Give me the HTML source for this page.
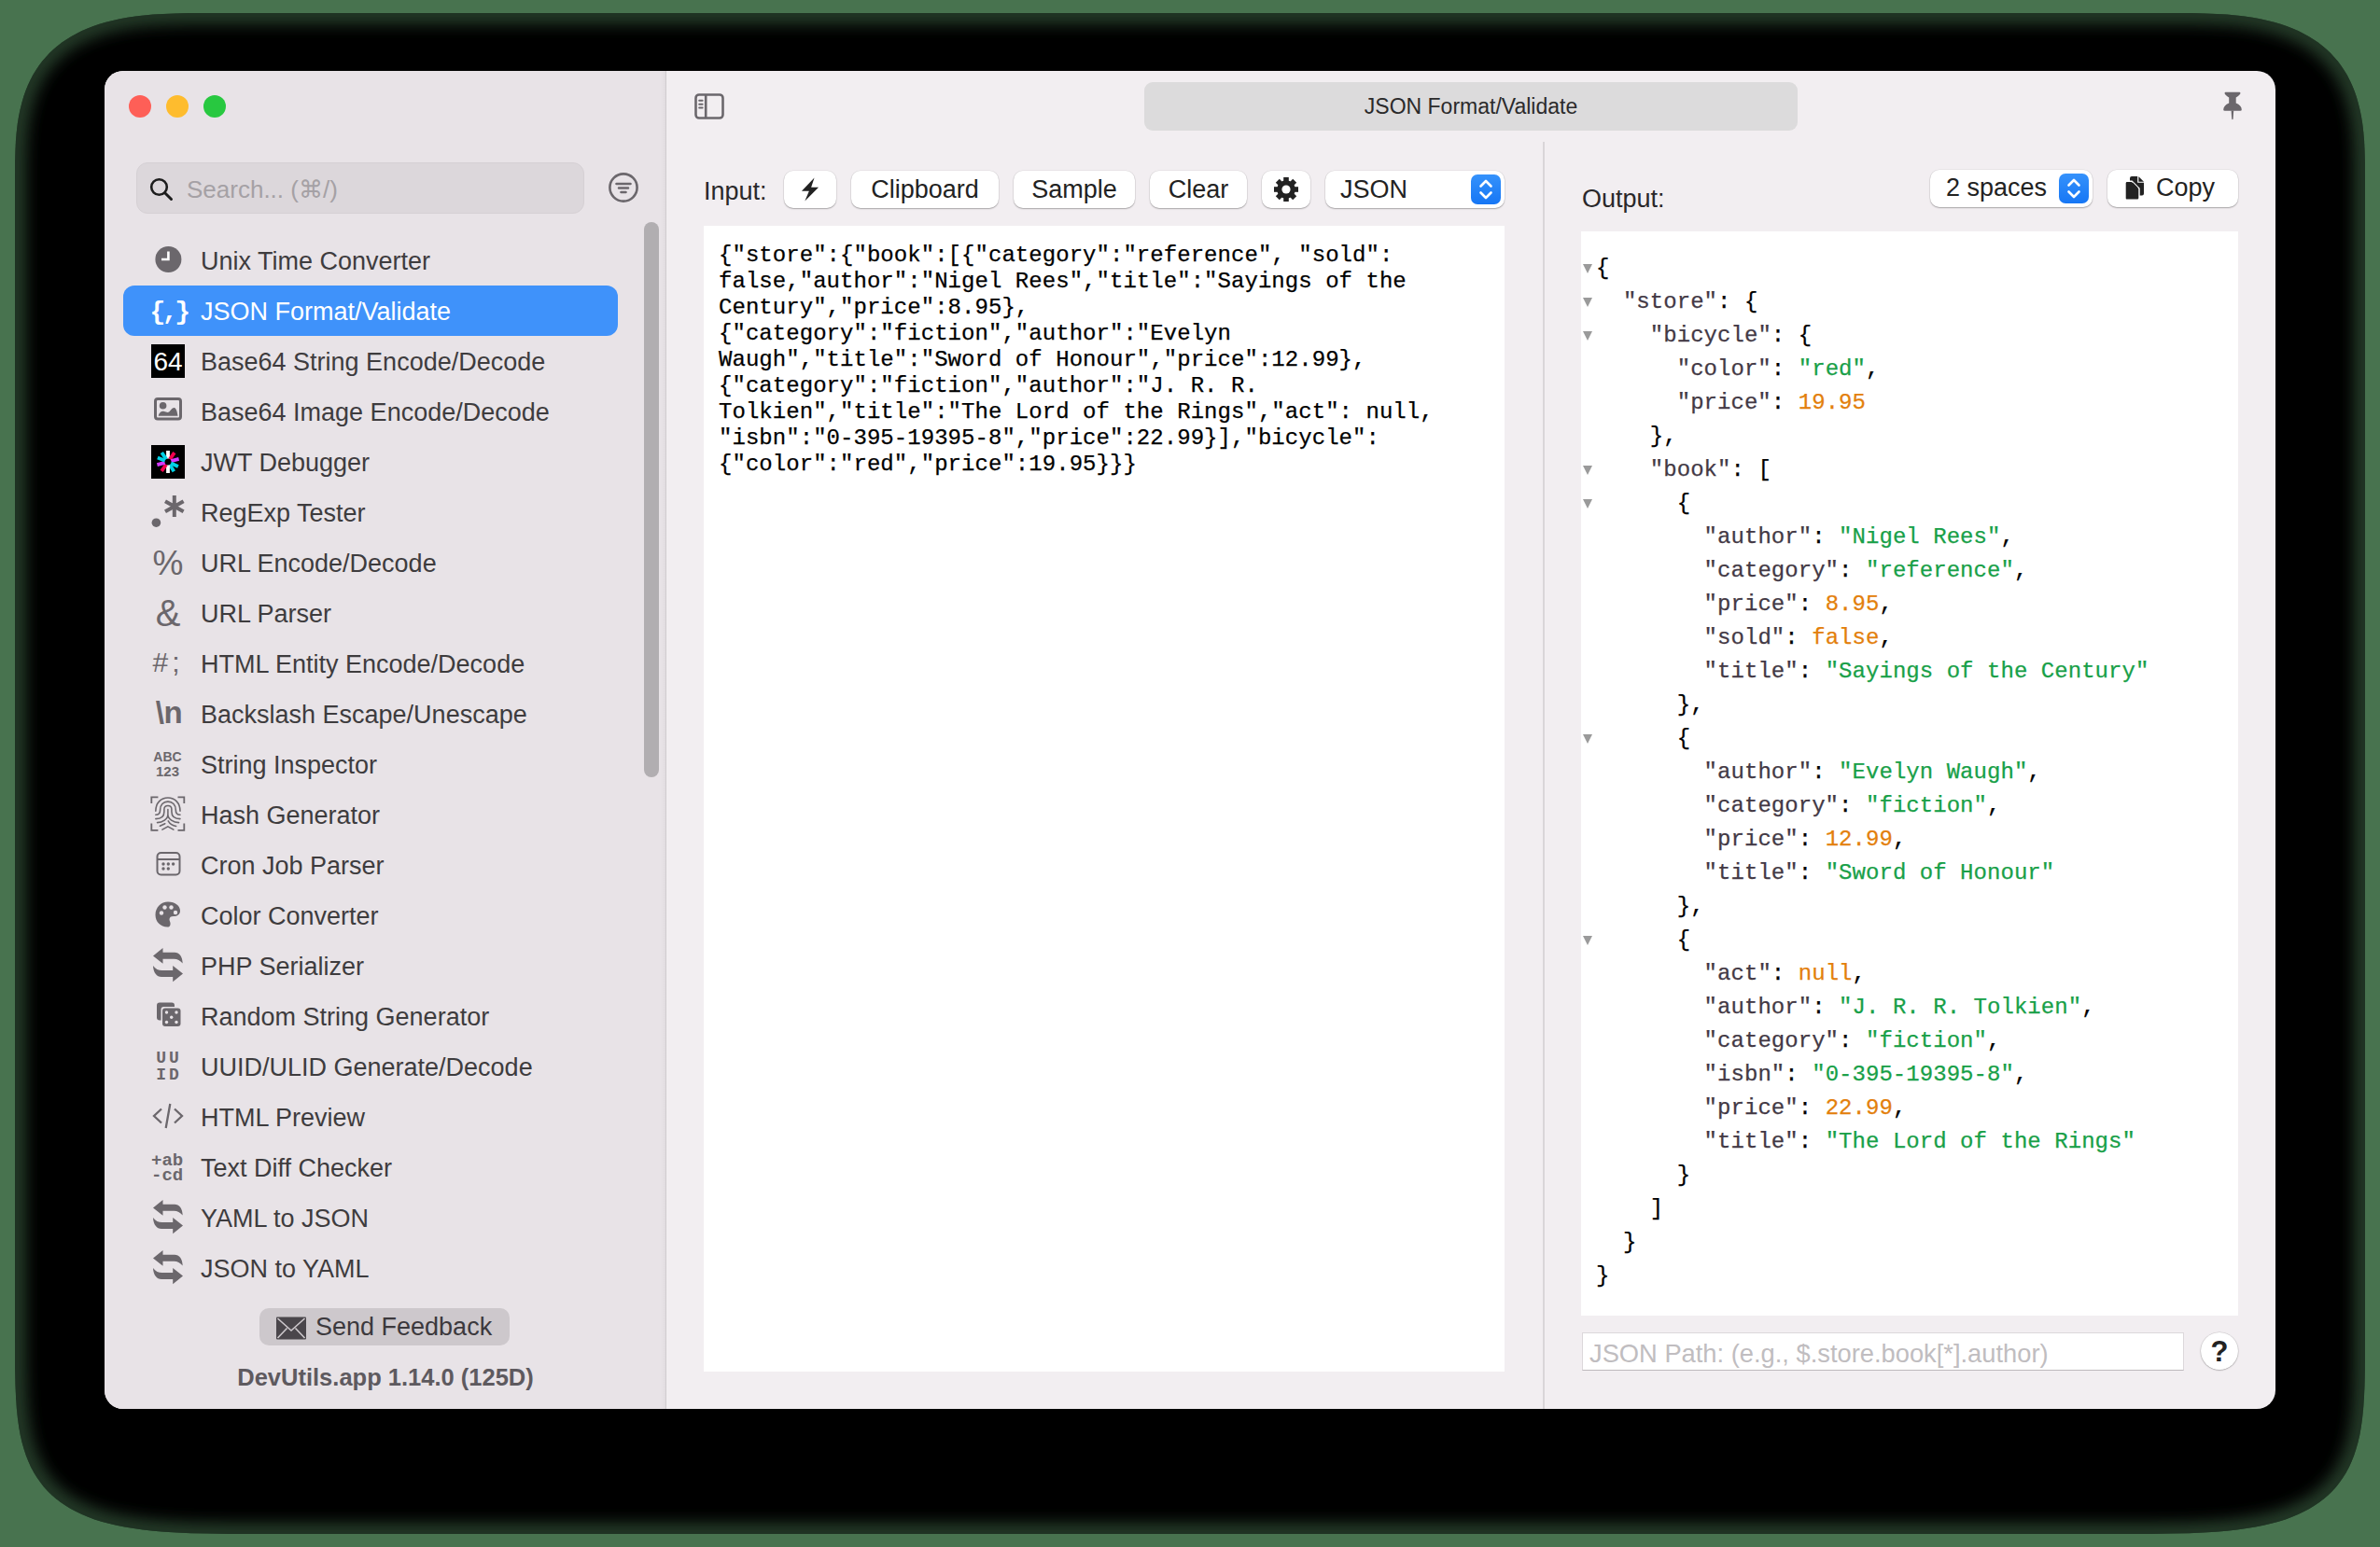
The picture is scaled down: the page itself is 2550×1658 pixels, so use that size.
<!DOCTYPE html>
<html><head><meta charset="utf-8">
<style>
*{box-sizing:border-box;margin:0;padding:0}
html,body{width:2550px;height:1658px;overflow:hidden;background:#48734f;font-family:"Liberation Sans",sans-serif}
.abs{position:absolute}
#win{position:absolute;left:112px;top:76px;width:2326px;height:1434px;border-radius:20px;overflow:hidden;background:#f2eef1}
#side{position:absolute;left:0;top:0;width:602px;height:1434px;background:#e8e3e7;border-right:1px solid #d8d3d7}
.tl{position:absolute;top:26px;width:24px;height:24px;border-radius:50%}
.row{position:absolute;left:20px;width:530px;height:54px;border-radius:12px}
.row .t{position:absolute;left:83px;top:1px;line-height:54px;font-size:27px;color:#3e3c3e;white-space:nowrap}
.row.sel{background:#3f92fa}
.row.sel .t{color:#fff}
.ic{position:absolute;left:30px;top:9px;width:36px;height:36px}
.btn{position:absolute;top:107px;height:40px;background:#fff;border-radius:10px;box-shadow:0 1px 1.5px rgba(0,0,0,.28),0 0 0 .5px rgba(0,0,0,.08);font-size:27px;color:#222;line-height:40px;text-align:center;white-space:nowrap}
.mono{font-family:"Liberation Mono",monospace;font-size:24px;white-space:pre;letter-spacing:0.045px;-webkit-text-stroke:0.25px currentColor}
.k{color:#433945}.s{color:#18a048}.n{color:#e37f0c}
.tri{display:inline-block}
</style></head>
<body>
<svg id="shadow" width="2550" height="1658" viewBox="0 0 2550 1658" style="position:absolute;left:0;top:0"><defs><clipPath id="sc"><path d="M16.0 194.0 L16.1 172.9 L16.5 160.5 L17.0 150.1 L17.8 140.9 L18.8 132.4 L20.1 124.6 L21.6 117.3 L23.3 110.4 L25.2 103.8 L27.4 97.6 L29.7 91.7 L32.4 86.0 L35.2 80.6 L38.3 75.5 L41.6 70.5 L45.1 65.8 L48.9 61.4 L52.9 57.1 L57.1 53.1 L61.6 49.2 L66.3 45.6 L71.3 42.2 L76.5 39.0 L82.0 35.9 L87.7 33.1 L93.7 30.5 L100.0 28.0 L106.6 25.8 L113.5 23.7 L120.8 21.9 L128.4 20.2 L136.5 18.8 L145.1 17.5 L154.2 16.4 L164.0 15.6 L174.8 14.9 L186.9 14.4 L201.3 14.1 L226.0 14.0 L2324.0 14.0 L2348.7 14.1 L2363.1 14.4 L2375.2 14.9 L2386.0 15.6 L2395.8 16.4 L2404.9 17.5 L2413.5 18.8 L2421.6 20.2 L2429.2 21.9 L2436.5 23.7 L2443.4 25.8 L2450.0 28.0 L2456.3 30.5 L2462.3 33.1 L2468.0 35.9 L2473.5 39.0 L2478.7 42.2 L2483.7 45.6 L2488.4 49.2 L2492.9 53.1 L2497.1 57.1 L2501.1 61.4 L2504.9 65.8 L2508.4 70.5 L2511.7 75.5 L2514.8 80.6 L2517.6 86.0 L2520.3 91.7 L2522.6 97.6 L2524.8 103.8 L2526.7 110.4 L2528.4 117.3 L2529.9 124.6 L2531.2 132.4 L2532.2 140.9 L2533.0 150.1 L2533.5 160.5 L2533.9 172.9 L2534.0 194.0 L2534.0 1424.0 L2533.9 1466.4 L2533.5 1484.4 L2532.9 1498.3 L2532.1 1510.1 L2531.0 1520.4 L2529.7 1529.7 L2528.2 1538.2 L2526.4 1546.0 L2524.3 1553.3 L2522.1 1560.1 L2519.5 1566.5 L2516.8 1572.5 L2513.7 1578.2 L2510.4 1583.5 L2506.9 1588.6 L2503.1 1593.4 L2499.0 1597.9 L2494.7 1602.2 L2490.0 1606.2 L2485.1 1610.1 L2479.9 1613.6 L2474.3 1617.0 L2468.5 1620.1 L2462.3 1623.1 L2455.7 1625.8 L2448.7 1628.4 L2441.4 1630.7 L2433.6 1632.8 L2425.3 1634.8 L2416.5 1636.5 L2407.0 1638.1 L2396.9 1639.5 L2385.9 1640.7 L2373.9 1641.7 L2360.5 1642.5 L2345.3 1643.2 L2327.3 1643.6 L2303.9 1643.9 L2249.0 1644.0 L301.0 1644.0 L246.1 1643.9 L222.7 1643.6 L204.7 1643.2 L189.5 1642.5 L176.1 1641.7 L164.1 1640.7 L153.1 1639.5 L143.0 1638.1 L133.5 1636.5 L124.7 1634.8 L116.4 1632.8 L108.6 1630.7 L101.3 1628.4 L94.3 1625.8 L87.7 1623.1 L81.5 1620.1 L75.7 1617.0 L70.1 1613.6 L64.9 1610.1 L60.0 1606.2 L55.3 1602.2 L51.0 1597.9 L46.9 1593.4 L43.1 1588.6 L39.6 1583.5 L36.3 1578.2 L33.2 1572.5 L30.5 1566.5 L27.9 1560.1 L25.7 1553.3 L23.6 1546.0 L21.8 1538.2 L20.3 1529.7 L19.0 1520.4 L17.9 1510.1 L17.1 1498.3 L16.5 1484.4 L16.1 1466.4 L16.0 1424.0 Z"/></clipPath><filter id="bl" x="-5%" y="-5%" width="110%" height="110%"><feGaussianBlur stdDeviation="8"/></filter></defs><path d="M16.0 194.0 L16.1 172.9 L16.5 160.5 L17.0 150.1 L17.8 140.9 L18.8 132.4 L20.1 124.6 L21.6 117.3 L23.3 110.4 L25.2 103.8 L27.4 97.6 L29.7 91.7 L32.4 86.0 L35.2 80.6 L38.3 75.5 L41.6 70.5 L45.1 65.8 L48.9 61.4 L52.9 57.1 L57.1 53.1 L61.6 49.2 L66.3 45.6 L71.3 42.2 L76.5 39.0 L82.0 35.9 L87.7 33.1 L93.7 30.5 L100.0 28.0 L106.6 25.8 L113.5 23.7 L120.8 21.9 L128.4 20.2 L136.5 18.8 L145.1 17.5 L154.2 16.4 L164.0 15.6 L174.8 14.9 L186.9 14.4 L201.3 14.1 L226.0 14.0 L2324.0 14.0 L2348.7 14.1 L2363.1 14.4 L2375.2 14.9 L2386.0 15.6 L2395.8 16.4 L2404.9 17.5 L2413.5 18.8 L2421.6 20.2 L2429.2 21.9 L2436.5 23.7 L2443.4 25.8 L2450.0 28.0 L2456.3 30.5 L2462.3 33.1 L2468.0 35.9 L2473.5 39.0 L2478.7 42.2 L2483.7 45.6 L2488.4 49.2 L2492.9 53.1 L2497.1 57.1 L2501.1 61.4 L2504.9 65.8 L2508.4 70.5 L2511.7 75.5 L2514.8 80.6 L2517.6 86.0 L2520.3 91.7 L2522.6 97.6 L2524.8 103.8 L2526.7 110.4 L2528.4 117.3 L2529.9 124.6 L2531.2 132.4 L2532.2 140.9 L2533.0 150.1 L2533.5 160.5 L2533.9 172.9 L2534.0 194.0 L2534.0 1424.0 L2533.9 1466.4 L2533.5 1484.4 L2532.9 1498.3 L2532.1 1510.1 L2531.0 1520.4 L2529.7 1529.7 L2528.2 1538.2 L2526.4 1546.0 L2524.3 1553.3 L2522.1 1560.1 L2519.5 1566.5 L2516.8 1572.5 L2513.7 1578.2 L2510.4 1583.5 L2506.9 1588.6 L2503.1 1593.4 L2499.0 1597.9 L2494.7 1602.2 L2490.0 1606.2 L2485.1 1610.1 L2479.9 1613.6 L2474.3 1617.0 L2468.5 1620.1 L2462.3 1623.1 L2455.7 1625.8 L2448.7 1628.4 L2441.4 1630.7 L2433.6 1632.8 L2425.3 1634.8 L2416.5 1636.5 L2407.0 1638.1 L2396.9 1639.5 L2385.9 1640.7 L2373.9 1641.7 L2360.5 1642.5 L2345.3 1643.2 L2327.3 1643.6 L2303.9 1643.9 L2249.0 1644.0 L301.0 1644.0 L246.1 1643.9 L222.7 1643.6 L204.7 1643.2 L189.5 1642.5 L176.1 1641.7 L164.1 1640.7 L153.1 1639.5 L143.0 1638.1 L133.5 1636.5 L124.7 1634.8 L116.4 1632.8 L108.6 1630.7 L101.3 1628.4 L94.3 1625.8 L87.7 1623.1 L81.5 1620.1 L75.7 1617.0 L70.1 1613.6 L64.9 1610.1 L60.0 1606.2 L55.3 1602.2 L51.0 1597.9 L46.9 1593.4 L43.1 1588.6 L39.6 1583.5 L36.3 1578.2 L33.2 1572.5 L30.5 1566.5 L27.9 1560.1 L25.7 1553.3 L23.6 1546.0 L21.8 1538.2 L20.3 1529.7 L19.0 1520.4 L17.9 1510.1 L17.1 1498.3 L16.5 1484.4 L16.1 1466.4 L16.0 1424.0 Z" fill="#000"/><g clip-path="url(#sc)"><path d="M16.0 194.0 L16.1 172.9 L16.5 160.5 L17.0 150.1 L17.8 140.9 L18.8 132.4 L20.1 124.6 L21.6 117.3 L23.3 110.4 L25.2 103.8 L27.4 97.6 L29.7 91.7 L32.4 86.0 L35.2 80.6 L38.3 75.5 L41.6 70.5 L45.1 65.8 L48.9 61.4 L52.9 57.1 L57.1 53.1 L61.6 49.2 L66.3 45.6 L71.3 42.2 L76.5 39.0 L82.0 35.9 L87.7 33.1 L93.7 30.5 L100.0 28.0 L106.6 25.8 L113.5 23.7 L120.8 21.9 L128.4 20.2 L136.5 18.8 L145.1 17.5 L154.2 16.4 L164.0 15.6 L174.8 14.9 L186.9 14.4 L201.3 14.1 L226.0 14.0 L2324.0 14.0 L2348.7 14.1 L2363.1 14.4 L2375.2 14.9 L2386.0 15.6 L2395.8 16.4 L2404.9 17.5 L2413.5 18.8 L2421.6 20.2 L2429.2 21.9 L2436.5 23.7 L2443.4 25.8 L2450.0 28.0 L2456.3 30.5 L2462.3 33.1 L2468.0 35.9 L2473.5 39.0 L2478.7 42.2 L2483.7 45.6 L2488.4 49.2 L2492.9 53.1 L2497.1 57.1 L2501.1 61.4 L2504.9 65.8 L2508.4 70.5 L2511.7 75.5 L2514.8 80.6 L2517.6 86.0 L2520.3 91.7 L2522.6 97.6 L2524.8 103.8 L2526.7 110.4 L2528.4 117.3 L2529.9 124.6 L2531.2 132.4 L2532.2 140.9 L2533.0 150.1 L2533.5 160.5 L2533.9 172.9 L2534.0 194.0 L2534.0 1424.0 L2533.9 1466.4 L2533.5 1484.4 L2532.9 1498.3 L2532.1 1510.1 L2531.0 1520.4 L2529.7 1529.7 L2528.2 1538.2 L2526.4 1546.0 L2524.3 1553.3 L2522.1 1560.1 L2519.5 1566.5 L2516.8 1572.5 L2513.7 1578.2 L2510.4 1583.5 L2506.9 1588.6 L2503.1 1593.4 L2499.0 1597.9 L2494.7 1602.2 L2490.0 1606.2 L2485.1 1610.1 L2479.9 1613.6 L2474.3 1617.0 L2468.5 1620.1 L2462.3 1623.1 L2455.7 1625.8 L2448.7 1628.4 L2441.4 1630.7 L2433.6 1632.8 L2425.3 1634.8 L2416.5 1636.5 L2407.0 1638.1 L2396.9 1639.5 L2385.9 1640.7 L2373.9 1641.7 L2360.5 1642.5 L2345.3 1643.2 L2327.3 1643.6 L2303.9 1643.9 L2249.0 1644.0 L301.0 1644.0 L246.1 1643.9 L222.7 1643.6 L204.7 1643.2 L189.5 1642.5 L176.1 1641.7 L164.1 1640.7 L153.1 1639.5 L143.0 1638.1 L133.5 1636.5 L124.7 1634.8 L116.4 1632.8 L108.6 1630.7 L101.3 1628.4 L94.3 1625.8 L87.7 1623.1 L81.5 1620.1 L75.7 1617.0 L70.1 1613.6 L64.9 1610.1 L60.0 1606.2 L55.3 1602.2 L51.0 1597.9 L46.9 1593.4 L43.1 1588.6 L39.6 1583.5 L36.3 1578.2 L33.2 1572.5 L30.5 1566.5 L27.9 1560.1 L25.7 1553.3 L23.6 1546.0 L21.8 1538.2 L20.3 1529.7 L19.0 1520.4 L17.9 1510.1 L17.1 1498.3 L16.5 1484.4 L16.1 1466.4 L16.0 1424.0 Z" fill="none" stroke="#48734f" stroke-width="24" stroke-opacity=".5" filter="url(#bl)"/></g></svg>
<div id="win">
 <div id="side">
  <div class="tl" style="left:26px;background:#fe5f57"></div>
  <div class="tl" style="left:66px;background:#febc2e"></div>
  <div class="tl" style="left:106px;background:#28c840"></div>
  <!-- search -->
  <div class="abs" style="left:34px;top:98px;width:480px;height:55px;border-radius:12px;background:#dcd7db;border:1px solid #d5d0d4"></div>
  <div class="abs" style="left:88px;top:100px;line-height:55px;font-size:26px;color:#a5a1a5">Search... (⌘/)</div>
  <!-- scrollbar -->
  <div class="abs" style="left:578px;top:162px;width:16px;height:595px;border-radius:8px;background:#b1aeb1"></div>
  <div class="row" style="top:176px"><svg class="ic" viewBox="0 0 36 36" width="36" height="36" style="overflow:visible" ><circle cx="18.4" cy="17" r="14" fill="#6b676c"/><path d="M18.4 8.5 V17 H11" fill="none" stroke="#fff" stroke-width="2.6"/></svg><div class="t">Unix Time Converter</div></div>
<div class="row sel" style="top:230px"><svg class="ic" viewBox="0 0 36 36" width="36" height="36" style="overflow:visible" ><text x="18.5" y="26.5" text-anchor="middle" font-family="Liberation Mono" font-weight="bold" font-size="28" fill="#fff" letter-spacing="-3.5">{,}</text></svg><div class="t">JSON Format/Validate</div></div>
<div class="row" style="top:284px"><svg class="ic" viewBox="0 0 36 36" width="36" height="36" style="overflow:visible" ><rect x="0" y="0" width="36" height="36" fill="#000"/><text x="18" y="28" text-anchor="middle" font-family="Liberation Sans" font-size="28" fill="#fff">64</text></svg><div class="t">Base64 String Encode/Decode</div></div>
<div class="row" style="top:338px"><svg class="ic" viewBox="0 0 36 36" width="36" height="36" style="overflow:visible" ><rect x="4.5" y="4.6" width="27" height="21.3" rx="2.5" fill="none" stroke="#6b676c" stroke-width="3"/><circle cx="12.6" cy="11.7" r="3.8" fill="#6b676c"/><path d="M7.7 22.8 C9 18 12 17.5 14 18 C16 18.5 17.5 19.5 19 18.5 C21 17 22.5 13.5 25 14 C27 14.8 28 19 28.5 22.8 Z" fill="#6b676c"/></svg><div class="t">Base64 Image Encode/Decode</div></div>
<div class="row" style="top:392px"><svg class="ic" viewBox="0 0 36 36" width="36" height="36" style="overflow:visible" ><rect x="0" y="0" width="36" height="36" fill="#000"/><line x1="18.00" y1="14.50" x2="18.00" y2="6.00" stroke="#fff" stroke-width="3.8"/><line x1="20.01" y1="15.13" x2="24.88" y2="8.17" stroke="#f5004f" stroke-width="3.8"/><line x1="21.38" y1="17.09" x2="29.59" y2="14.89" stroke="#d63aff" stroke-width="3.8"/><line x1="21.17" y1="19.48" x2="28.88" y2="23.07" stroke="#00d2e6" stroke-width="3.8"/><line x1="19.85" y1="20.97" x2="24.36" y2="28.18" stroke="#00d2e6" stroke-width="3.8"/><line x1="18.00" y1="21.50" x2="18.00" y2="30.00" stroke="#fff" stroke-width="3.8"/><line x1="15.99" y1="20.87" x2="11.12" y2="27.83" stroke="#f5004f" stroke-width="3.8"/><line x1="14.62" y1="18.91" x2="6.41" y2="21.11" stroke="#d63aff" stroke-width="3.8"/><line x1="14.75" y1="16.69" x2="6.87" y2="13.50" stroke="#00d2e6" stroke-width="3.8"/><line x1="16.04" y1="15.10" x2="11.29" y2="8.05" stroke="#00d2e6" stroke-width="3.8"/></svg><div class="t">JWT Debugger</div></div>
<div class="row" style="top:446px"><svg class="ic" viewBox="0 0 36 36" width="36" height="36" style="overflow:visible" ><circle cx="5.4" cy="29.2" r="4.8" fill="#6b676c"/><path d="M24.8 0 V23 M15 6.2 L34.6 17.3 M15 17.3 L34.6 6.2" stroke="#6b676c" stroke-width="4"/></svg><div class="t">RegExp Tester</div></div>
<div class="row" style="top:500px"><svg class="ic" viewBox="0 0 36 36" width="36" height="36" style="overflow:visible" ><text x="18" y="31" text-anchor="middle" font-family="Liberation Sans" font-size="37" fill="#6b676c">%</text></svg><div class="t">URL Encode/Decode</div></div>
<div class="row" style="top:554px"><svg class="ic" viewBox="0 0 36 36" width="36" height="36" style="overflow:visible" ><text x="18" y="31.5" text-anchor="middle" font-family="Liberation Sans" font-size="40" fill="#6b676c">&amp;</text></svg><div class="t">URL Parser</div></div>
<div class="row" style="top:608px"><svg class="ic" viewBox="0 0 36 36" width="36" height="36" style="overflow:visible" ><text x="18" y="26.5" text-anchor="middle" font-family="Liberation Sans" font-size="30" fill="#6b676c" letter-spacing="4">#;</text></svg><div class="t">HTML Entity Encode/Decode</div></div>
<div class="row" style="top:662px"><svg class="ic" viewBox="0 0 36 36" width="36" height="36" style="overflow:visible" ><text x="19" y="28" text-anchor="middle" font-family="Liberation Sans" font-weight="bold" font-size="33" fill="#6b676c" letter-spacing="-0.5">\n</text></svg><div class="t">Backslash Escape/Unescape</div></div>
<div class="row" style="top:716px"><svg class="ic" viewBox="0 0 36 36" width="36" height="36" style="overflow:visible" ><text x="17.5" y="15" text-anchor="middle" font-family="Liberation Sans" font-weight="bold" font-size="14" fill="#6b676c">ABC</text><text x="17.5" y="31" text-anchor="middle" font-family="Liberation Sans" font-weight="bold" font-size="15" fill="#6b676c">123</text></svg><div class="t">String Inspector</div></div>
<div class="row" style="top:770px"><svg class="ic" viewBox="0 0 36 36" width="36" height="36" style="overflow:visible" ><g fill="none" stroke="#6b676c" stroke-width="1.8"><path d="M0.3 6 V-0.7 H7.4"/><path d="M28.5 -0.7 H35.3 V6"/><path d="M0.3 27.5 V34.8 H7.4"/><path d="M28.5 34.8 H35.3 V27.5"/></g><g fill="none" stroke="#6b676c" stroke-width="1.55" stroke-linecap="round"><path d="M4.8 14.3 C4.8 5.5 10.5 0 17.9 0 C25.3 0 31 5.5 31 14.3"/><path d="M4.8 18.3 C8 18.3 9.6 16.5 9.6 13 C9.6 7.5 13 4.1 17.9 4.1 C22.8 4.1 26.3 7.5 26.3 13 C26.3 16.5 28 18.3 31 18.3"/><path d="M4.8 22.6 C11 22.6 13.9 19.5 13.9 15 V12.4 C13.9 10 15.5 8.4 17.9 8.4 C20.3 8.4 21.9 10 21.9 12.4 V15 C21.9 19.5 25 22.6 31 22.6"/><path d="M17.9 12.6 V18 C17.9 23 12 26.6 6.5 26.6 M17.9 18 C17.9 23 24 26.6 29.6 26.6"/><path d="M9.4 30.3 L14.8 27.7 M18.2 24.9 C20 28 23.5 30 26.7 30.5 M11.9 34.2 L17.9 30.8 L23.9 34.2"/></g></svg><div class="t">Hash Generator</div></div>
<div class="row" style="top:824px"><svg class="ic" viewBox="0 0 36 36" width="36" height="36" style="overflow:visible" ><rect x="6.5" y="5" width="24" height="23.5" rx="4" fill="none" stroke="#6b676c" stroke-width="2"/><path d="M6.5 12 H30.5" stroke="#6b676c" stroke-width="2"/><circle cx="13" cy="17" r="1.7" fill="#6b676c"/><circle cx="18.3" cy="17" r="1.7" fill="#6b676c"/><circle cx="23.6" cy="17" r="1.7" fill="#6b676c"/><circle cx="13" cy="22" r="1.7" fill="#6b676c"/><circle cx="18.3" cy="22" r="1.7" fill="#6b676c"/></svg><div class="t">Cron Job Parser</div></div>
<div class="row" style="top:878px"><svg class="ic" viewBox="0 0 36 36" width="36" height="36" style="overflow:visible" ><path d="M18 3.5 C26 3.5 31 8 31 13 C31 17 28 19 24 19 C21 19 19.5 20 19.5 22.5 C19.5 24.5 21 25.5 20.5 28 C20 30 19 30.5 17.5 30.5 C10 30.5 4.5 25 4.5 17.5 C4.5 9.5 10.5 3.5 18 3.5 Z" fill="#6b676c"/><circle cx="11" cy="15.5" r="2.2" fill="#e8e3e7"/><circle cx="14.5" cy="9.5" r="2.2" fill="#e8e3e7"/><circle cx="21.5" cy="9.5" r="2.2" fill="#e8e3e7"/><circle cx="26" cy="15" r="2.2" fill="#e8e3e7"/></svg><div class="t">Color Converter</div></div>
<div class="row" style="top:932px"><svg class="ic" viewBox="0 0 36 36" width="36" height="36" style="overflow:visible" ><path d="M2 7.5 L12.5 -1 V3.7 H25 C30 3.7 33.5 8 33.7 15.6 C31 12.3 28 10.8 24.5 10.8 H12.5 V15.8 Z" fill="#6b676c"/><path d="M34 26.6 L23.2 35.2 V29.9 H11 C6 29.9 2.3 25.5 2 17.9 C4.5 21.5 8 23 11.5 23 H23.2 V17.9 Z" fill="#6b676c"/></svg><div class="t">PHP Serializer</div></div>
<div class="row" style="top:986px"><svg class="ic" viewBox="0 0 36 36" width="36" height="36" style="overflow:visible" ><rect x="6" y="3.5" width="19" height="19" rx="3" fill="#6b676c"/><rect x="10.5" y="8" width="21" height="21" rx="3" fill="#e8e3e7"/><rect x="12" y="9.5" width="19.5" height="19.5" rx="3" fill="#6b676c"/><circle cx="16.5" cy="14" r="1.7" fill="#e8e3e7"/><circle cx="27" cy="14" r="1.7" fill="#e8e3e7"/><circle cx="21.7" cy="19.2" r="1.7" fill="#e8e3e7"/><circle cx="16.5" cy="24.5" r="1.7" fill="#e8e3e7"/><circle cx="27" cy="24.5" r="1.7" fill="#e8e3e7"/></svg><div class="t">Random String Generator</div></div>
<div class="row" style="top:1040px"><svg class="ic" viewBox="0 0 36 36" width="36" height="36" style="overflow:visible" ><text x="19" y="14" text-anchor="middle" font-family="Liberation Mono" font-weight="bold" font-size="18" fill="#6b676c" letter-spacing="3">UU</text><text x="19" y="32.3" text-anchor="middle" font-family="Liberation Mono" font-weight="bold" font-size="18" fill="#6b676c" letter-spacing="3">ID</text></svg><div class="t">UUID/ULID Generate/Decode</div></div>
<div class="row" style="top:1094px"><svg class="ic" viewBox="0 0 36 36" width="36" height="36" style="overflow:visible" ><path d="M11 9.5 L3 17 L11 24.5 M25 9.5 L33 17 L25 24.5 M20.3 4 L15.7 30" fill="none" stroke="#6b676c" stroke-width="2.3"/></svg><div class="t">HTML Preview</div></div>
<div class="row" style="top:1148px"><svg class="ic" viewBox="0 0 36 36" width="36" height="36" style="overflow:visible" ><text x="0" y="16" font-family="Liberation Mono" font-weight="bold" font-size="19" fill="#6b676c" letter-spacing="0">+ab</text><text x="0" y="32" font-family="Liberation Mono" font-weight="bold" font-size="19" fill="#6b676c" letter-spacing="0">-cd</text></svg><div class="t">Text Diff Checker</div></div>
<div class="row" style="top:1202px"><svg class="ic" viewBox="0 0 36 36" width="36" height="36" style="overflow:visible" ><path d="M2 7.5 L12.5 -1 V3.7 H25 C30 3.7 33.5 8 33.7 15.6 C31 12.3 28 10.8 24.5 10.8 H12.5 V15.8 Z" fill="#6b676c"/><path d="M34 26.6 L23.2 35.2 V29.9 H11 C6 29.9 2.3 25.5 2 17.9 C4.5 21.5 8 23 11.5 23 H23.2 V17.9 Z" fill="#6b676c"/></svg><div class="t">YAML to JSON</div></div>
<div class="row" style="top:1256px"><svg class="ic" viewBox="0 0 36 36" width="36" height="36" style="overflow:visible" ><path d="M2 7.5 L12.5 -1 V3.7 H25 C30 3.7 33.5 8 33.7 15.6 C31 12.3 28 10.8 24.5 10.8 H12.5 V15.8 Z" fill="#6b676c"/><path d="M34 26.6 L23.2 35.2 V29.9 H11 C6 29.9 2.3 25.5 2 17.9 C4.5 21.5 8 23 11.5 23 H23.2 V17.9 Z" fill="#6b676c"/></svg><div class="t">JSON to YAML</div></div>
<div class="abs" style="left:596px;top:0;width:6px;height:1434px;background:linear-gradient(to right,rgba(0,0,0,0),rgba(0,0,0,.035))"></div>
  <svg class="abs" style="left:45px;top:110px" width="34" height="34" viewBox="0 0 34 34"><circle cx="13.5" cy="14.5" r="8.3" fill="none" stroke="#1d1d1d" stroke-width="2.6"/><path d="M19.7 20.7 L26.5 27.5" stroke="#1d1d1d" stroke-width="3" stroke-linecap="round"/></svg>
  <svg class="abs" style="left:538px;top:107px" width="36" height="36" viewBox="0 0 36 36"><circle cx="18" cy="18" r="14.6" fill="none" stroke="#6b676c" stroke-width="2.6"/><path d="M10.5 14 H25.5 M13 18.5 H23 M15.5 23 H20.5" stroke="#6b676c" stroke-width="2.6" stroke-linecap="round"/></svg>
  <div class="abs" style="left:166px;top:1326px;width:268px;height:40px;border-radius:10px;background:#cdc8cc"></div>
  <svg class="abs" style="left:183px;top:1332px" width="34" height="28" viewBox="0 0 34 28"><rect x="1" y="3.5" width="32" height="24" rx="1" fill="#4a464b"/><path d="M2.5 5 L17 18 L31.5 5 M2.5 26 L12.5 15.5 M31.5 26 L21.5 15.5" fill="none" stroke="#cdc8cc" stroke-width="1.6"/></svg>
  <div class="abs" style="left:226px;top:1326px;line-height:40px;font-size:27px;color:#3c393d;white-space:nowrap">Send Feedback</div>
  <div class="abs" style="left:0;width:602px;top:1384px;line-height:32px;text-align:center;font-size:25.5px;font-weight:bold;color:#5e5a5f;white-space:nowrap">DevUtils.app 1.14.0 (125D)</div>

 </div>

 <div id="main">
  <!-- sidebar toggle -->
  <svg class="abs" style="left:630px;top:22px" width="36" height="32" viewBox="0 0 36 32"><rect x="3.5" y="3.5" width="29" height="25" rx="3.5" fill="none" stroke="#6b676c" stroke-width="2.6"/><path d="M14.2 3.5 V28.5" stroke="#6b676c" stroke-width="2.6"/><path d="M7.2 9.8 H10.6 M7.2 13.7 H10.6 M7.2 17.6 H10.6" stroke="#6b676c" stroke-width="2" stroke-linecap="round"/></svg>
  <!-- title -->
  <div class="abs" style="left:1114px;top:12px;width:700px;height:52px;border-radius:9px;background:#dcdbdc;text-align:center;line-height:52px;font-size:23px;color:#2b2a2b">JSON Format/Validate</div>
  <!-- pin -->
  <svg class="abs" style="left:2264px;top:20px" width="32" height="36" viewBox="0 0 32 36"><path d="M8.5 2.8 H23.5 Q24.6 2.8 24.4 4.2 Q24 5.8 19.7 8.5 L19.7 14.6 Q25.6 17 25.8 21.4 Q25.8 22.8 24.3 22.8 H7.7 Q6.2 22.8 6.2 21.4 Q6.5 17 12.2 14.6 L12.2 8.5 Q7.9 5.8 7.6 4.2 Q7.4 2.8 8.5 2.8 Z" fill="#6b676c"/><path d="M14.6 22.5 H17.2 L16.6 31.6 Q15.9 32.8 15.2 31.6 Z" fill="#6b676c"/></svg>
  <!-- input header -->
  <div class="abs" style="left:642px;top:114px;font-size:27px;color:#2a282a;line-height:30px">Input:</div>
  <div class="btn" style="left:728px;width:56px"><svg style="position:absolute;left:15px;top:7px" width="26" height="26" viewBox="0 0 22 23"><path d="M15 0.5 L3 13 H10 L6 22.5 L19 9.5 H12 Z" fill="#222"/></svg></div>
  <div class="btn" style="left:800px;width:158px">Clipboard</div>
  <div class="btn" style="left:974px;width:130px">Sample</div>
  <div class="btn" style="left:1120px;width:104px">Clear</div>
  <div class="btn" style="left:1240px;width:52px"><svg style="position:absolute;left:11px;top:5px" width="30" height="30" viewBox="0 0 30 30"><g fill="#222"><circle cx="15" cy="15" r="9.8"/><rect x="12.2" y="2" width="5.6" height="7" transform="rotate(0 15 15)"/><rect x="12.2" y="2" width="5.6" height="7" transform="rotate(45 15 15)"/><rect x="12.2" y="2" width="5.6" height="7" transform="rotate(90 15 15)"/><rect x="12.2" y="2" width="5.6" height="7" transform="rotate(135 15 15)"/><rect x="12.2" y="2" width="5.6" height="7" transform="rotate(180 15 15)"/><rect x="12.2" y="2" width="5.6" height="7" transform="rotate(225 15 15)"/><rect x="12.2" y="2" width="5.6" height="7" transform="rotate(270 15 15)"/><rect x="12.2" y="2" width="5.6" height="7" transform="rotate(315 15 15)"/></g><circle cx="15" cy="15" r="4.6" fill="#fff"/></svg></div>
  <div class="btn" style="left:1308px;width:192px;text-align:left;padding-left:16px">JSON<div style="position:absolute;left:156px;top:4px;width:32px;height:32px;border-radius:7px;background:linear-gradient(#3592fb,#1676f5)"><svg width="32" height="32" viewBox="0 0 32 32"><path d="M10.5 12.5 L16 7 L21.5 12.5 M10.5 19.5 L16 25 L21.5 19.5" fill="none" stroke="#fff" stroke-width="2.6" stroke-linecap="round" stroke-linejoin="round"/></svg></div></div>
  <!-- input area -->
  <div class="abs" style="left:642px;top:166px;width:858px;height:1228px;background:#fff"></div>
  <div class="abs mono" style="left:658px;top:184.3px;line-height:28px;color:#000">{"store":{"book":[{"category":"reference", "sold":
false,"author":"Nigel Rees","title":"Sayings of the
Century","price":8.95},
{"category":"fiction","author":"Evelyn
Waugh","title":"Sword of Honour","price":12.99},
{"category":"fiction","author":"J. R. R.
Tolkien","title":"The Lord of the Rings","act": null,
"isbn":"0-395-19395-8","price":22.99}],"bicycle":
{"color":"red","price":19.95}}}</div>
  <!-- divider -->
  <div class="abs" style="left:1541px;top:76px;width:2px;height:1358px;background:#d9d5d8"></div>
  <!-- output header -->
  <div class="abs" style="left:1583px;top:121.5px;font-size:27px;color:#2a282a;line-height:30px">Output:</div>
  <div class="btn" style="left:1956px;top:106px;width:174px;text-align:left;padding-left:17px;line-height:39px">2 spaces<div style="position:absolute;left:138px;top:4px;width:32px;height:32px;border-radius:7px;background:linear-gradient(#3592fb,#1676f5)"><svg width="32" height="32" viewBox="0 0 32 32"><path d="M10.5 12.5 L16 7 L21.5 12.5 M10.5 19.5 L16 25 L21.5 19.5" fill="none" stroke="#fff" stroke-width="2.6" stroke-linecap="round" stroke-linejoin="round"/></svg></div></div>
  <div class="btn" style="left:2146px;top:106px;width:140px;text-align:left;padding-left:52px;line-height:39px">Copy<svg style="position:absolute;left:18px;top:7.3px" width="24" height="28" viewBox="0 0 24 28"><path d="M6 2 Q6 0 8 0 H14.2 V6.8 H21 V18.5 Q21 20.6 19 20.6 H6 Z" fill="#222"/><path d="M15.4 0.2 L21 5.8 H15.4 Z" fill="#222"/><path d="M1 7.2 Q1 5.2 3 5.2 H8.2 L16 13 V23.3 Q16 25.3 14 25.3 H3 Q1 25.3 1 23.3 Z" fill="#222" stroke="#fff" stroke-width="1.4"/><path d="M9 6.4 L15 12.4 H9 Z" fill="#222"/></svg></div>
  <!-- output area -->
  <div class="abs" style="left:1582px;top:171.5px;width:704px;height:1162px;background:#fff"></div>
  <div class="abs mono" style="left:1598px;top:194.2px;line-height:36px;color:#000">{
  <span class="k">"store"</span>: {
    <span class="k">"bicycle"</span>: {
      <span class="k">"color"</span>: <span class="s">"red"</span>,
      <span class="k">"price"</span>: <span class="n">19.95</span>
    },
    <span class="k">"book"</span>: [
      {
        <span class="k">"author"</span>: <span class="s">"Nigel Rees"</span>,
        <span class="k">"category"</span>: <span class="s">"reference"</span>,
        <span class="k">"price"</span>: <span class="n">8.95</span>,
        <span class="k">"sold"</span>: <span class="n">false</span>,
        <span class="k">"title"</span>: <span class="s">"Sayings of the Century"</span>
      },
      {
        <span class="k">"author"</span>: <span class="s">"Evelyn Waugh"</span>,
        <span class="k">"category"</span>: <span class="s">"fiction"</span>,
        <span class="k">"price"</span>: <span class="n">12.99</span>,
        <span class="k">"title"</span>: <span class="s">"Sword of Honour"</span>
      },
      {
        <span class="k">"act"</span>: <span class="n">null</span>,
        <span class="k">"author"</span>: <span class="s">"J. R. R. Tolkien"</span>,
        <span class="k">"category"</span>: <span class="s">"fiction"</span>,
        <span class="k">"isbn"</span>: <span class="s">"0-395-19395-8"</span>,
        <span class="k">"price"</span>: <span class="n">22.99</span>,
        <span class="k">"title"</span>: <span class="s">"The Lord of the Rings"</span>
      }
    ]
  }
}</div>
<svg class="abs" style="left:1584.3px;top:206.7px" width="10" height="10" viewBox="0 0 10 10"><path d="M0 0 H10 L5 10 Z" fill="#9a9a9a"/></svg>
<svg class="abs" style="left:1584.3px;top:242.7px" width="10" height="10" viewBox="0 0 10 10"><path d="M0 0 H10 L5 10 Z" fill="#9a9a9a"/></svg>
<svg class="abs" style="left:1584.3px;top:278.7px" width="10" height="10" viewBox="0 0 10 10"><path d="M0 0 H10 L5 10 Z" fill="#9a9a9a"/></svg>
<svg class="abs" style="left:1584.3px;top:926.7px" width="10" height="10" viewBox="0 0 10 10"><path d="M0 0 H10 L5 10 Z" fill="#9a9a9a"/></svg>
<svg class="abs" style="left:1584.3px;top:422.7px" width="10" height="10" viewBox="0 0 10 10"><path d="M0 0 H10 L5 10 Z" fill="#9a9a9a"/></svg>
<svg class="abs" style="left:1584.3px;top:458.7px" width="10" height="10" viewBox="0 0 10 10"><path d="M0 0 H10 L5 10 Z" fill="#9a9a9a"/></svg>
<svg class="abs" style="left:1584.3px;top:710.7px" width="10" height="10" viewBox="0 0 10 10"><path d="M0 0 H10 L5 10 Z" fill="#9a9a9a"/></svg>

  <!-- json path -->
  <div class="abs" style="left:1583px;top:1351.5px;width:645px;height:41px;background:#fff;border:1px solid #dcd8db;border-bottom-color:#bdb9bc"></div>
  <div class="abs" style="left:1591px;top:1354.5px;line-height:40px;font-size:27.3px;color:#c0bdc0;white-space:nowrap">JSON Path: (e.g., $.store.book[*].author)</div>
  <div class="abs" style="left:2246px;top:1352px;width:40px;height:40px;border-radius:50%;background:#fff;box-shadow:0 .5px 1.5px rgba(0,0,0,.35),0 0 0 .5px rgba(0,0,0,.1);text-align:center;line-height:42px;font-size:31px;color:#222;font-weight:bold;-webkit-text-stroke:0px">?</div>
 </div>
</div>
</body></html>
